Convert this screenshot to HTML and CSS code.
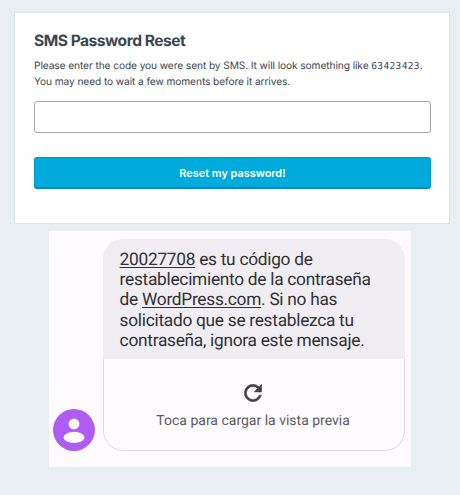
FILE: index.html
```html
<!DOCTYPE html>
<html lang="en">
<head>
<meta charset="utf-8">
<title>SMS Password Reset</title>
<link rel="stylesheet" href="styles.css">
</head>
<body>
<main class="card">
  <h1 class="title">SMS Password Reset</h1>
  <p class="intro">Please enter the code you were sent by SMS. It will look something like <code>63423423</code>.<br>You may need to wait a few moments before it arrives.</p>
  <input class="code-input" type="text" aria-label="Code">
  <button class="submit" type="button">Reset my password!</button>
</main>
<section class="message" lang="es">
  <svg class="avatar" viewBox="0 0 42 42" aria-hidden="true">
    <circle cx="21" cy="21" r="21" fill="#af5cf3"/>
    <circle cx="21" cy="15" r="5.4" fill="#fefbff"/>
    <ellipse cx="21" cy="28.4" rx="10.4" ry="5.6" fill="#fefbff"/>
  </svg>
  <div class="bubble">
    <p class="sms"><u>20027708</u> es tu código de<br>restablecimiento de la contraseña<br>de <u>WordPress.com</u>. Si no has<br>solicitado que se restablezca tu<br>contraseña, ignora este mensaje.</p>
    <div class="preview">
      <svg class="refresh" viewBox="3.7 3.7 16.6 16.6" aria-hidden="true"><path fill="#424145" stroke="#424145" stroke-width=".5" d="M17.65 6.35A7.96 7.96 0 0 0 12 4a8 8 0 1 0 7.73 10h-2.08A6 6 0 1 1 12 6c1.66 0 3.14.69 4.22 1.78L13 11h7V4z"/></svg>
      <span class="preview-label">Toca para cargar la vista previa</span>
    </div>
  </div>
</section>
</body>
</html>
```

FILE: styles.css
```css
* { box-sizing: border-box; }

body {
  margin: 0;
  padding-top: 12px;
  min-height: 495px;
  background: #e8eef2;
  font-family: Inter, "Liberation Sans", sans-serif;
  color: #3d464f;
  text-rendering: geometricPrecision;
}

.card {
  width: 436px;
  height: 212px;
  margin-left: 14px;
  padding: 17px 19px 0;
  background: #fff;
  border: 1px solid #d9e3ea;
}

.title {
  margin: 0;
  font-size: 15.6px;
  line-height: 22px;
  font-weight: 700;
  letter-spacing: -0.5px;
}

.intro {
  height: 30px;
  margin: 7px 0 0;
  font-size: 10.2px;
  line-height: 15.5px;
  letter-spacing: -0.1px;
  white-space: nowrap;
}

.intro code {
  font-family: "DejaVu Sans Mono", monospace;
  font-size: 9.6px;
  line-height: 1;
  letter-spacing: 0.3px;
}

.code-input {
  display: block;
  width: 397px;
  height: 32px;
  margin: 12px 0 0;
  padding: 0 8px;
  border: 1px solid #a5a8aa;
  border-radius: 3px;
  background: #fff;
}

.submit {
  display: block;
  width: 397px;
  height: 32px;
  margin: 24px 0 0;
  padding: 0;
  border: 1px solid #0096c9;
  border-bottom: 2px solid #0087be;
  border-radius: 3px;
  background: #00aadc;
  color: #fff;
  font: 600 10.9px/28px Inter, "Liberation Sans", sans-serif;
}

.message {
  display: flex;
  align-items: flex-end;
  gap: 8px;
  width: 362px;
  height: 236px;
  margin: 7px 0 0 49px;
  padding: 0 6px 16px 4px;
  background: #fefbff;
  font-family: Roboto, sans-serif;
}

.avatar { width: 42px; height: 42px; margin-left: -0.4px; }

.bubble {
  width: 302px;
  height: 212px;
  border-radius: 20px;
  overflow: hidden;
}

.sms {
  height: 120px;
  margin: 0;
  padding: 11px 0 0 17px;
  background: #f0eef3;
  color: #323136;
  font-size: 17.3px;
  line-height: 20.2px;
  letter-spacing: -0.27px;
  white-space: nowrap;
}

.sms u {
  text-decoration-thickness: 1px;
  text-underline-offset: 2px;
}

.preview {
  display: flex;
  flex-direction: column;
  align-items: center;
  height: 92px;
  padding: 25px 1px 0 0;
  border: 1px solid #dddbe0;
  border-top: 0;
  border-radius: 0 0 20px 20px;
}

.refresh { width: 18px; height: 18px; }

.preview-label {
  margin-top: 9px;
  font-size: 14px;
  line-height: 20px;
  color: #5c5b60;
  white-space: nowrap;
}
```
